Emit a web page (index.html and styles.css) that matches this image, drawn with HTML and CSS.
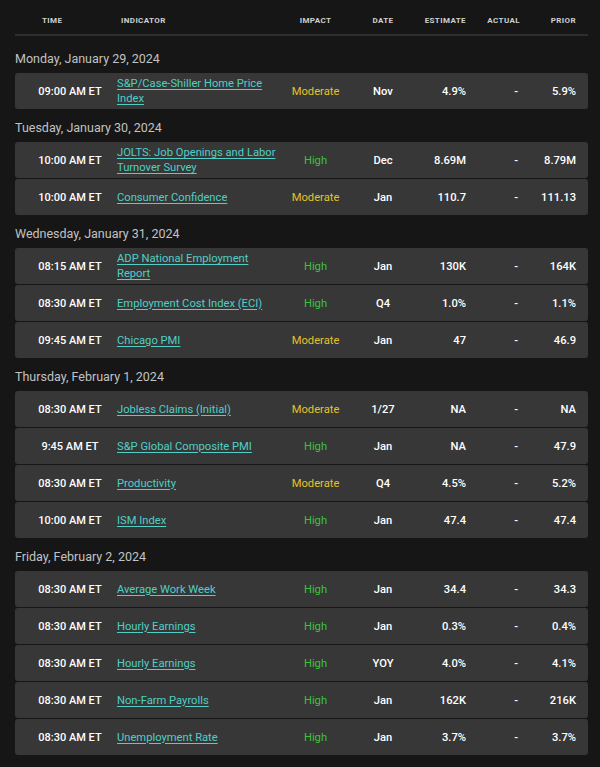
FILE: index.html
```html
<!DOCTYPE html>
<html lang="en">
<head>
<meta charset="utf-8">
<title>Economic Calendar</title>
<link rel="stylesheet" href="styles.css">
</head>
<body>
<div class="calendar">
  <div class="head">
    <div class="c-time">Time</div>
    <div class="c-ind">Indicator</div>
    <div class="c-imp">Impact</div>
    <div class="c-date">Date</div>
    <div class="c-est">Estimate</div>
    <div class="c-act">Actual</div>
    <div class="c-prior">Prior</div>
  </div>

  <div class="day">Monday, January 29, 2024</div>
  <div class="rows">
    <div class="row"><div class="c-time">09:00 AM ET</div><div class="c-ind"><a href="#">S&amp;P/Case-Shiller Home Price Index</a></div><div class="c-imp mod">Moderate</div><div class="c-date">Nov</div><div class="c-est">4.9%</div><div class="c-act">-</div><div class="c-prior">5.9%</div></div>
  </div>

  <div class="day">Tuesday, January 30, 2024</div>
  <div class="rows">
    <div class="row"><div class="c-time">10:00 AM ET</div><div class="c-ind"><a href="#">JOLTS: Job Openings and Labor Turnover Survey</a></div><div class="c-imp high">High</div><div class="c-date">Dec</div><div class="c-est">8.69M</div><div class="c-act">-</div><div class="c-prior">8.79M</div></div>
    <div class="row"><div class="c-time">10:00 AM ET</div><div class="c-ind"><a href="#">Consumer Confidence</a></div><div class="c-imp mod">Moderate</div><div class="c-date">Jan</div><div class="c-est">110.7</div><div class="c-act">-</div><div class="c-prior">111.13</div></div>
  </div>

  <div class="day">Wednesday, January 31, 2024</div>
  <div class="rows">
    <div class="row"><div class="c-time">08:15 AM ET</div><div class="c-ind"><a href="#">ADP National Employment Report</a></div><div class="c-imp high">High</div><div class="c-date">Jan</div><div class="c-est">130K</div><div class="c-act">-</div><div class="c-prior">164K</div></div>
    <div class="row"><div class="c-time">08:30 AM ET</div><div class="c-ind"><a href="#">Employment Cost Index (ECI)</a></div><div class="c-imp high">High</div><div class="c-date">Q4</div><div class="c-est">1.0%</div><div class="c-act">-</div><div class="c-prior">1.1%</div></div>
    <div class="row"><div class="c-time">09:45 AM ET</div><div class="c-ind"><a href="#">Chicago PMI</a></div><div class="c-imp mod">Moderate</div><div class="c-date">Jan</div><div class="c-est">47</div><div class="c-act">-</div><div class="c-prior">46.9</div></div>
  </div>

  <div class="day">Thursday, February 1, 2024</div>
  <div class="rows">
    <div class="row"><div class="c-time">08:30 AM ET</div><div class="c-ind"><a href="#">Jobless Claims (Initial)</a></div><div class="c-imp mod">Moderate</div><div class="c-date">1/27</div><div class="c-est">NA</div><div class="c-act">-</div><div class="c-prior">NA</div></div>
    <div class="row"><div class="c-time">9:45 AM ET</div><div class="c-ind"><a href="#">S&amp;P Global Composite PMI</a></div><div class="c-imp high">High</div><div class="c-date">Jan</div><div class="c-est">NA</div><div class="c-act">-</div><div class="c-prior">47.9</div></div>
    <div class="row"><div class="c-time">08:30 AM ET</div><div class="c-ind"><a href="#">Productivity</a></div><div class="c-imp mod">Moderate</div><div class="c-date">Q4</div><div class="c-est">4.5%</div><div class="c-act">-</div><div class="c-prior">5.2%</div></div>
    <div class="row"><div class="c-time">10:00 AM ET</div><div class="c-ind"><a href="#">ISM Index</a></div><div class="c-imp high">High</div><div class="c-date">Jan</div><div class="c-est">47.4</div><div class="c-act">-</div><div class="c-prior">47.4</div></div>
  </div>

  <div class="day">Friday, February 2, 2024</div>
  <div class="rows">
    <div class="row"><div class="c-time">08:30 AM ET</div><div class="c-ind"><a href="#">Average Work Week</a></div><div class="c-imp high">High</div><div class="c-date">Jan</div><div class="c-est">34.4</div><div class="c-act">-</div><div class="c-prior">34.3</div></div>
    <div class="row"><div class="c-time">08:30 AM ET</div><div class="c-ind"><a href="#">Hourly Earnings</a></div><div class="c-imp high">High</div><div class="c-date">Jan</div><div class="c-est">0.3%</div><div class="c-act">-</div><div class="c-prior">0.4%</div></div>
    <div class="row"><div class="c-time">08:30 AM ET</div><div class="c-ind"><a href="#">Hourly Earnings</a></div><div class="c-imp high">High</div><div class="c-date">YOY</div><div class="c-est">4.0%</div><div class="c-act">-</div><div class="c-prior">4.1%</div></div>
    <div class="row"><div class="c-time">08:30 AM ET</div><div class="c-ind"><a href="#">Non-Farm Payrolls</a></div><div class="c-imp high">High</div><div class="c-date">Jan</div><div class="c-est">162K</div><div class="c-act">-</div><div class="c-prior">216K</div></div>
    <div class="row"><div class="c-time">08:30 AM ET</div><div class="c-ind"><a href="#">Unemployment Rate</a></div><div class="c-imp high">High</div><div class="c-date">Jan</div><div class="c-est">3.7%</div><div class="c-act">-</div><div class="c-prior">3.7%</div></div>
  </div>
</div>
</body>
</html>
```

FILE: styles.css
```css
html, body {
  margin: 0;
  padding: 0;
  background: #161616;
}
body {
  font-family: Roboto, "Liberation Sans", Arial, sans-serif;
  color: #ffffff;
}
.calendar {
  padding: 0 12px 12px 15px;
}
.head, .row {
  display: grid;
  grid-template-columns: 102px 164px 69px 66px 50px 54px 56px 12px;
  align-items: center;
}
.head {
  height: 36px;
  padding-top: 6px;
  box-sizing: border-box;
  border-bottom: 2px solid #2e2e2e;
  font-size: 8px;
  font-weight: 700;
  letter-spacing: 0.4px;
  text-transform: uppercase;
  color: #d0d0d0;
}
.head .c-time { text-align: left; padding-left: 27px; }
.head .c-ind { padding-left: 4px; }
.day {
  margin: 10px 0 5px;
  font-size: 12.5px;
  line-height: 18px;
  color: #c2c2c2;
}
.head + .day { margin-top: 14px; }
.rows {
  display: flex;
  flex-direction: column;
  gap: 1px;
}
.row {
  min-height: 36px;
  background: #373737;
  border-radius: 3px;
  font-size: 11.2px;
  line-height: 15px;
  padding: 3px 0;
  box-sizing: border-box;
}
.row .c-time {
  padding-left: 8px;
  text-align: center;
  font-weight: 500;
  font-size: 11px;
}
.c-ind a {
  color: #4fcfc6;
  text-decoration: underline;
  text-underline-offset: 2px;
}
.c-imp, .c-date { text-align: center; }
.row .c-date { font-weight: 500; }
.c-est, .c-act, .c-prior { text-align: right; }
.row .c-est, .row .c-act, .row .c-prior { font-weight: 500; }
.row .c-act { padding-right: 2px; }
.mod { color: #e6c02b; }
.high { color: #3cc23c; }
```
